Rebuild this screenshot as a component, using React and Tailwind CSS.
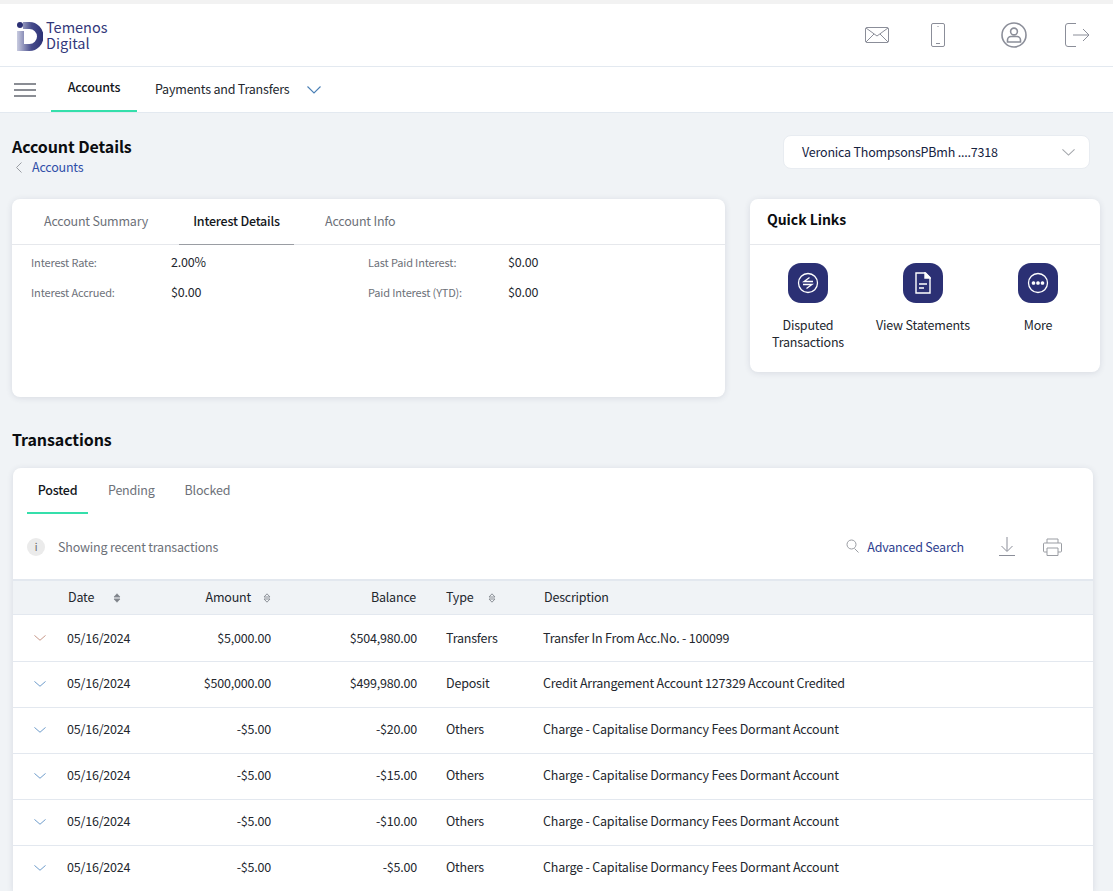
const rows = [
  { amount: "$5,000.00", balance: "$504,980.00", type: "Transfers", desc: "Transfer In From Acc.No. - 100099", first: true },
  { amount: "$500,000.00", balance: "$499,980.00", type: "Deposit", desc: "Credit Arrangement Account 127329 Account Credited" },
  { amount: "-$5.00", balance: "-$20.00", type: "Others", desc: "Charge - Capitalise Dormancy Fees Dormant Account" },
  { amount: "-$5.00", balance: "-$15.00", type: "Others", desc: "Charge - Capitalise Dormancy Fees Dormant Account" },
  { amount: "-$5.00", balance: "-$10.00", type: "Others", desc: "Charge - Capitalise Dormancy Fees Dormant Account" },
  { amount: "-$5.00", balance: "-$5.00", type: "Others", desc: "Charge - Capitalise Dormancy Fees Dormant Account" },
];

const Logo = () => (
  <svg width="26" height="29" viewBox="0 0 26 29" className="shrink-0 mt-[2px]">
    <defs>
      <linearGradient id="logoGrad" x1="0" x2="1" y1="0" y2="0">
        <stop offset="0" stopColor="#c9cce0" />
        <stop offset="0.55" stopColor="#474c8c" />
        <stop offset="1" stopColor="#2b3074" />
      </linearGradient>
    </defs>
    <path d="M6 0h6.5a14 14.500 0 0 1 0 29H0V9h7v13h5.500a7.500 7.500 0 0 0 0-15H6z" fill="url(#logoGrad)" />
    <circle cx="3" cy="3" r="3" fill="#2b3074" />
  </svg>
);

const SortIcon = ({ active }) => (
  <svg width="8" height="10" viewBox="0 0 8 10" className="shrink-0">
    <path d="M4 .8 7 4H1z" fill={active ? "#7c8087" : "none"} stroke="#8d9198" strokeWidth="1" />
    <path d="M4 9.2 1 6h6z" fill={active ? "#7c8087" : "none"} stroke="#8d9198" strokeWidth="1" />
  </svg>
);

const Chevron = ({ w = 14, h = 8, className }) => (
  <svg width={w} height={h} viewBox="0 0 14 8" preserveAspectRatio="none" fill="none" stroke="currentColor" strokeWidth="1.1" className={className}>
    <path d="M.5.5 7 7 13.500.5" />
  </svg>
);

const QuickLink = ({ label, children }) => (
  <div className="flex flex-col items-center w-[115px] text-center leading-[17px] text-[#23272e]">
    <div className="w-10 h-10 rounded-[13px] bg-[#2b3074] flex items-center justify-center mb-[13px]">
      {children}
    </div>
    <span className="ml-px">{label}</span>
  </div>
);

const App = () => {
  return (
    <div
      className="h-[891px] overflow-hidden bg-[#f0f3f6] text-[#23272e] text-[12.5px] tracking-[-0.2px]"
      style={{ fontFamily: '"Noto Sans CJK SC", "Noto Sans", sans-serif' }}
    >
      {/* Header */}
      <div className="h-1 bg-[#f2f2f2]" />
      <div className="h-[63px] bg-white border-b border-[#e3e9f0] flex items-center pl-[17px] pr-[23px]">
        <Logo />
        <div className="ml-[3px] text-[14.5px] leading-[16px] tracking-normal text-[#33387a]">
          Temenos<br />Digital
        </div>
        <div className="ml-auto flex items-center text-[#8b8e99]">
          <svg width="24" height="16" viewBox="0 0 24 16" fill="none" stroke="currentColor" strokeWidth="1">
            <rect x="0.5" y="0.5" width="23" height="15" rx="1.5" />
            <path d="m1 1 11 8 11-8M1 15l8-8M23 15l-8-8" />
          </svg>
          <svg className="ml-[42px]" width="14" height="24" viewBox="0 0 14 24" fill="none" stroke="currentColor" strokeWidth="1">
            <rect x="0.5" y="0.5" width="13" height="23" rx="1.5" />
            <path d="M5 20.5h4M7 3v1" />
          </svg>
          <svg className="ml-[56px]" width="26" height="26" viewBox="0 0 26 26" fill="none" stroke="currentColor" strokeWidth="1.6">
            <circle cx="13" cy="13" r="12" />
            <circle cx="13" cy="9.5" r="3.4" />
            <path d="M6.5 20v-2a3.500 3.500 0 0 1 3.500-3.500h6a3.500 3.500 0 0 1 3.500 3.500v2z" />
          </svg>
          <svg className="ml-[38px]" width="25" height="24" viewBox="0 0 25 24" fill="none" stroke="currentColor" strokeWidth="1">
            <path d="M11 .5H3A2.500 2.500 0 0 0 .5 3v18A2.500 2.500 0 0 0 3 23.500h8M8 12h16M18 6l6 6-6 6" />
          </svg>
        </div>
      </div>

      {/* Nav */}
      <div className="h-[46px] bg-white border-b border-[#e3e9f0] flex items-stretch">
        <div className="w-[51px] pl-[14px] flex flex-col justify-center gap-[4px]">
          <span className="block w-[22px] h-[2px] bg-[#8a8d94]" />
          <span className="block w-[22px] h-[2px] bg-[#8a8d94]" />
          <span className="block w-[22px] h-[2px] bg-[#8a8d94]" />
        </div>
        <div className="w-[86px] flex items-center justify-center font-medium text-[#14171c] border-b-2 border-[#35dfab] pb-[2px]">
          Accounts
        </div>
        <div className="ml-[18px] flex items-center text-[#23272e]">
          Payments and Transfers
          <Chevron className="ml-[18px] text-[#4a7fb5]" />
        </div>
      </div>

      <div className="pl-3 pr-[13px]">
        {/* Title row */}
        <div className="flex justify-between items-start h-[86px] pt-[22px]">
          <div className="-mt-px">
            <h1 className="text-[16px] tracking-[-0.1px] leading-[24px] font-semibold text-[#0b0d10]">Account Details</h1>
            <div className="flex items-center text-[#2f4ea8] leading-[18px]">
              <svg width="6" height="11" viewBox="0 0 6 11" fill="none" stroke="#9a9da3" strokeWidth="1" className="ml-[4px] mr-[10px]">
                <path d="M5.500.5.5 5.500l5 5" />
              </svg>
              Accounts
            </div>
          </div>
          <div className="w-[307px] h-[34px] mr-[10px] bg-white rounded-lg border border-[#e8ecf1] flex items-center justify-between pl-[18px] pr-[14px] text-[#16233f]">
            Veronica ThompsonsPBmh ....7318
            <Chevron w={13} h={7} className="text-[#a3a6ab]" />
          </div>
        </div>

        {/* Cards */}
        <div className="flex items-start gap-[25px]">
          <div className="w-[713px] h-[198px] bg-white rounded-lg shadow-[0_1px_6px_rgba(40,50,80,0.12)]">
            <div className="h-[46px] border-b border-[#e6e8ec] flex pl-[18px] text-[#6d7179]">
              <div className="w-[149px] pl-[14px] flex items-center">Account Summary</div>
              <div className="w-[115px] flex items-center justify-center font-medium text-[#14171c] border-b border-[#9a9da3] -mb-px">Interest Details</div>
              <div className="pl-[31px] flex items-center">Account Info</div>
            </div>
            <div className="pl-[19px] pt-[2px] grid grid-cols-[140px_197px_140px_1fr] grid-rows-[30px_30px] items-center text-[#23272e]">
              <span className="text-[11px] tracking-[-0.15px] text-[#6d7179]">Interest Rate:</span>
              <span>2.00%</span>
              <span className="text-[11px] tracking-[-0.15px] text-[#6d7179]">Last Paid Interest:</span>
              <span>$0.00</span>
              <span className="text-[11px] tracking-[-0.15px] text-[#6d7179]">Interest Accrued:</span>
              <span>$0.00</span>
              <span className="text-[11px] tracking-[-0.15px] text-[#6d7179]">Paid Interest (YTD):</span>
              <span>$0.00</span>
            </div>
          </div>

          <div className="w-[350px] h-[173px] bg-white rounded-lg shadow-[0_1px_6px_rgba(40,50,80,0.12)]">
            <div className="h-[46px] border-b border-[#e6e8ec] flex items-center pl-[17px] pb-[4px] text-[14px] tracking-[-0.05px] font-semibold text-[#0b0d10]">
              Quick Links
            </div>
            <div className="flex pt-[18px]">
              <QuickLink label="Disputed Transactions">
                <svg width="22" height="22" viewBox="0 0 22 22" fill="none" stroke="#fff" strokeWidth="1.3">
                  <circle cx="11" cy="11" r="9.500" />
                  <path d="M12.500 5.500 7 9.500h9M6 12.500h9L9.500 16.500" />
                </svg>
              </QuickLink>
              <QuickLink label="View Statements">
                <svg width="16" height="22" viewBox="0 0 16 22" fill="none" stroke="#fff" strokeWidth="1.4">
                  <path d="M1 1h9.500L15 5.500V21H1z" />
                  <path d="M10 1l5 5h-5z" fill="#fff" />
                  <path d="M4 12h8M4 16h5" />
                </svg>
              </QuickLink>
              <QuickLink label="More">
                <svg width="22" height="22" viewBox="0 0 22 22" fill="none" stroke="#fff" strokeWidth="1.3">
                  <circle cx="11" cy="11" r="9.500" />
                  <circle cx="6.500" cy="11" r="1.200" fill="#fff" />
                  <circle cx="11" cy="11" r="1.200" fill="#fff" />
                  <circle cx="15.500" cy="11" r="1.200" fill="#fff" />
                </svg>
              </QuickLink>
            </div>
          </div>
        </div>

        <h2 className="mt-[29px] mb-[16px] text-[16px] tracking-[-0.1px] leading-[26px] font-semibold text-[#0b0d10]">Transactions</h2>

        {/* Transactions card */}
        <div className="ml-px w-[1080px] bg-white rounded-t-lg shadow-[0_1px_6px_rgba(40,50,80,0.12)]">
          <div className="h-[46px] flex pl-[14px] text-[#6d7179]">
            <div className="w-[61px] flex items-center justify-center font-medium text-[#14171c] border-b-2 border-[#35dfab]">Posted</div>
            <div className="ml-[20px] pb-[2px] flex items-center">Pending</div>
            <div className="ml-[30px] pb-[2px] flex items-center">Blocked</div>
          </div>
          <div className="h-[65px] flex items-center pl-[14px] pr-[31px]">
            <span className="w-[18px] h-[18px] rounded-full bg-[#ebebeb] flex items-center justify-center text-[10px] text-[#666]">i</span>
            <span className="ml-[13px] mt-[2px] text-[#6d7179]">Showing recent transactions</span>
            <svg className="ml-auto -mt-[2px] text-[#9a9da3]" width="13" height="14" viewBox="0 0 13 14" fill="none" stroke="currentColor" strokeWidth="1">
              <circle cx="5.500" cy="5.500" r="4.500" />
              <path d="m8.500 9.500 4 4" />
            </svg>
            <span className="ml-[8px] mt-[2px] text-[#2f3f8f]">Advanced Search</span>
            <svg className="ml-[35px] text-[#8b8e99]" width="16" height="19" viewBox="0 0 16 19" fill="none" stroke="currentColor" strokeWidth="1">
              <path d="M8 0v14M2.500 9 8 14.500 13.500 9M0 18.500h16" />
            </svg>
            <svg className="ml-[28px] text-[#9a9da3]" width="19" height="18" viewBox="0 0 19 18" fill="none" stroke="currentColor" strokeWidth="1">
              <path d="M4 5V1h11v4M4 14H1.500A1 1 0 0 1 .5 13V6a1 1 0 0 1 1-1h16a1 1 0 0 1 1 1v7a1 1 0 0 1-1 1H15" />
              <path d="M4 10h11v7.500H4z" />
            </svg>
          </div>

          {/* Table */}
          <div className="h-[36px] bg-[#f0f3f6] border-t-2 border-[#e3e8ef] border-b border-b-[#e3e8ef] grid grid-cols-[54px_100px_104px_146px_126px_1fr] items-center">
            <span />
            <span className="flex items-center pl-[1px] gap-[19px]">Date <SortIcon active /></span>
            <span className="flex items-center justify-end gap-[12px]">Amount <SortIcon /></span>
            <span className="text-right pr-[1px]">Balance</span>
            <span className="flex items-center pl-[29px] gap-[15px]">Type <SortIcon /></span>
            <span className="pl-px">Description</span>
          </div>
          {rows.map((r, i) => (
            <div
              key={i}
              className={`${r.first ? "h-[47px]" : "h-[46px] pb-[2px]"} border-b border-[#e3e8ef] grid grid-cols-[54px_100px_104px_146px_126px_1fr] items-center`}
            >
              <span className="pl-[21px]">
                <Chevron w={12} h={6} className={r.first ? "text-[#c08a7a]" : "text-[#5b8fc4]"} />
              </span>
              <span>05/16/2024</span>
              <span className="text-right">{r.amount}</span>
              <span className="text-right">{r.balance}</span>
              <span className="pl-[29px]">{r.type}</span>
              <span>{r.desc}</span>
            </div>
          ))}
        </div>
      </div>
    </div>
  );
};

export default App;
